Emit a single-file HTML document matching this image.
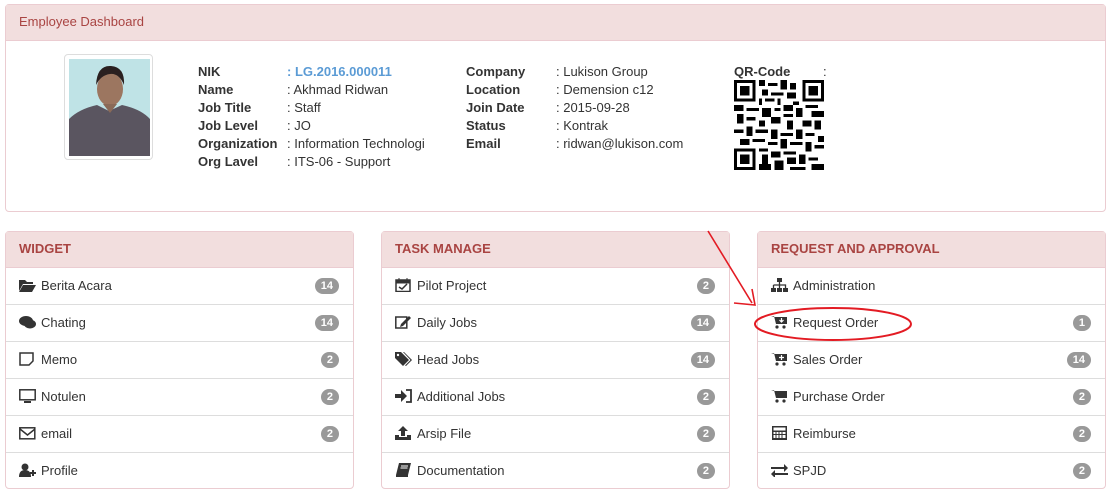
<!DOCTYPE html>
<html><head><meta charset="utf-8"><style>
*{box-sizing:border-box;margin:0;padding:0}
body{width:1111px;height:494px;background:#fff;font-family:"Liberation Sans",Arial,sans-serif;font-size:13px;color:#333;position:relative;overflow:hidden}
.p{position:absolute;border:1px solid #ebccd1;border-radius:4px;background:#fff}
.h{background:#f2dede;color:#a94442;border-bottom:1px solid #ebccd1;height:36px;line-height:34px;padding-left:13px}
.t{position:absolute;line-height:18px;white-space:nowrap}
.b{font-weight:bold}
.row{height:37px;border-bottom:1px solid #ddd;position:relative;line-height:35px;padding-left:13px;color:#333}
.row:last-child{border-bottom:none}
.ic{display:inline-block;width:17px;height:14px;vertical-align:-2px;margin-right:5px}
.bd{position:absolute;right:14px;top:10px;background:#999;color:#fff;font-size:11px;font-weight:bold;line-height:16px;height:16px;border-radius:8px;padding:0 6px}
.hh{font-weight:bold;font-size:13px}
</style></head><body>
<div class="p" style="left:5px;top:4px;width:1101px;height:208px">
<div class="h">Employee Dashboard</div>
</div>
<div style="position:absolute;left:64px;top:54px;width:89px;height:106px;border:1px solid #ddd;border-radius:4px;padding:4px;background:#fff">
<svg width="81" height="97" viewBox="0 0 81 97"><rect width="81" height="97" fill="#bfe3e6"/><path d="M0 60 Q10 50 28 46 L40 52 L53 46 Q72 50 81 60 V97 H0Z" fill="#5a5560"/><ellipse cx="41" cy="30" rx="13" ry="17" fill="#9c7660"/><path d="M27 26 Q28 6 42 7 Q56 8 55 26 Q50 14 41 15 Q32 16 27 26Z" fill="#2a2020"/><path d="M34 45 L41 54 L48 45Z" fill="#8a6a58"/></svg>
</div>
<div class="t b" style="left:198px;top:63px">NIK<br>Name<br>Job Title<br>Job Level<br>Organization<br>Org Lavel</div>
<div class="t" style="left:287px;top:63px"><span style="color:#5b9bd5;font-weight:bold">: LG.2016.000011</span><br>: Akhmad Ridwan<br>: Staff<br>: JO<br>: Information Technologi<br>: ITS-06 - Support</div>
<div class="t b" style="left:466px;top:63px">Company<br>Location<br>Join Date<br>Status<br>Email</div>
<div class="t" style="left:556px;top:63px">: Lukison Group<br>: Demension c12<br>: 2015-09-28<br>: Kontrak<br>: ridwan@lukison.com</div>
<div class="t b" style="left:734px;top:63px">QR-Code</div><div class="t" style="left:823px;top:63px">:</div>
<svg style="position:absolute;left:734px;top:80px" width="90" height="90" viewBox="0 0 29 29" shape-rendering="crispEdges">
<g fill="#000">
<path d="M0 0h7v7h-7zM22 0h7v7h-7zM0 22h7v7h-7z"/>
</g><g fill="#fff"><path d="M1 1h5v5h-5zM23 1h5v5h-5zM1 23h5v5h-5z"/></g>
<g fill="#000"><path d="M2 2h3v3h-3zM24 2h3v3h-3zM2 24h3v3h-3z"/>
<path d="M8 0h2v2h-2zM11 1h3v1h-3zM15 0h2v3h-2zM18 1h2v2h-2zM9 3h2v2h-2zM12 4h4v1h-4zM17 4h3v2h-3zM8 6h1v2h-1zM10 6h3v1h-3zM14 6h1v2h-1zM19 7h2v1h-2z
M0 8h3v2h-3zM4 9h4v1h-4zM9 9h3v3h-3zM13 9h2v1h-2zM16 8h3v2h-3zM20 9h2v3h-2zM23 8h4v1h-4zM25 10h4v2h-4z
M1 11h2v3h-2zM4 12h3v1h-3zM8 13h2v2h-2zM12 12h3v2h-3zM16 11h3v1h-3zM17 13h2v3h-2zM22 13h3v2h-3zM26 13h2v3h-2z
M0 16h3v1h-3zM4 15h2v3h-2zM7 16h4v1h-4zM12 16h2v3h-2zM15 17h4v1h-4zM20 16h2v3h-2zM23 17h3v1h-3zM27 18h2v2h-2z
M2 19h3v2h-3zM6 19h4v1h-4zM11 20h3v1h-3zM15 19h2v3h-2zM18 20h4v1h-4zM23 20h2v3h-2zM26 21h3v1h-3z
M8 22h3v1h-3zM9 24h2v3h-2zM12 23h3v2h-3zM16 23h4v1h-4zM8 27h4v2h-4zM13 26h3v3h-3zM17 25h3v2h-3zM21 24h2v3h-2zM24 25h3v1h-3zM18 28h5v1h-5zM25 27h4v2h-4z"/></g></svg>

<div class="p" style="left:5px;top:231px;width:349px;height:258px">
<div class="h hh">WIDGET</div>
<div class="row"><svg class="ic" viewBox="0 0 17 14"><path d="M0 2h6l2 2h6v2H4L0 13z M4 7h13l-4 7H0z" fill="#333"/></svg>Berita Acara<span class="bd">14</span></div>
<div class="row"><svg class="ic" viewBox="0 0 17 14"><ellipse cx="7" cy="6" rx="7" ry="5" fill="#333"/><ellipse cx="11" cy="9" rx="6" ry="4.5" fill="#333"/></svg>Chating<span class="bd">14</span></div>
<div class="row"><svg class="ic" viewBox="0 0 17 14"><path d="M1 1h13v8l-4 4H1z" fill="none" stroke="#333" stroke-width="1.5"/></svg>Memo<span class="bd">2</span></div>
<div class="row"><svg class="ic" viewBox="0 0 17 14"><rect x="0.8" y="0.8" width="15.4" height="10" fill="none" stroke="#333" stroke-width="1.5"/><path d="M5 13h7" stroke="#333" stroke-width="2"/></svg>Notulen<span class="bd">2</span></div>
<div class="row"><svg class="ic" viewBox="0 0 17 14"><rect x="0.8" y="1.8" width="15" height="11" fill="none" stroke="#333" stroke-width="1.5"/><path d="M1 3l7.5 6L16 3" fill="none" stroke="#333" stroke-width="1.5"/></svg>email<span class="bd">2</span></div>
<div class="row"><svg class="ic" viewBox="0 0 17 14"><circle cx="6" cy="4" r="3.5" fill="#333"/><path d="M0 14q0-7 6-7t6 7z" fill="#333"/><path d="M11 10h6M14 7v6" stroke="#333" stroke-width="2"/></svg>Profile</div>
</div>

<div class="p" style="left:381px;top:231px;width:349px;height:258px">
<div class="h hh">TASK MANAGE</div>
<div class="row"><svg class="ic" viewBox="0 0 17 14"><rect x="1" y="2" width="14" height="11.5" fill="none" stroke="#333" stroke-width="1.5"/><path d="M1 2h14v3H1z M4 0v3M12 0v3" stroke="#333" fill="#333"/><path d="M4 9l3 2 5-5" fill="none" stroke="#333" stroke-width="1.5"/></svg>Pilot Project<span class="bd">2</span></div>
<div class="row"><svg class="ic" viewBox="0 0 17 14"><rect x="0.8" y="2" width="11" height="11" fill="none" stroke="#333" stroke-width="1.5"/><path d="M6 9l8-8 2 2-8 8-3 1z" fill="#333"/></svg>Daily Jobs<span class="bd">14</span></div>
<div class="row"><svg class="ic" viewBox="0 0 17 14"><path d="M0 0h6l8 8-6 6-8-8z" fill="#333"/><path d="M8 0h1l8 8-6 6-1-.5 5.5-5.5z" fill="#333"/><circle cx="3" cy="3" r="1.2" fill="#fff"/></svg>Head Jobs<span class="bd">14</span></div>
<div class="row"><svg class="ic" viewBox="0 0 17 14"><path d="M0 5h6V1l6 6-6 6V9H0z" fill="#333"/><path d="M11 1h5v12h-5" fill="none" stroke="#333" stroke-width="1.8"/></svg>Additional Jobs<span class="bd">2</span></div>
<div class="row"><svg class="ic" viewBox="0 0 17 14"><path d="M8 0l5 5H10v5H6V5H3z M0 9h4v2h8V9h4v5H0z" fill="#333"/></svg>Arsip File<span class="bd">2</span></div>
<div class="row"><svg class="ic" viewBox="0 0 17 14"><path d="M4 0h12l-3 12H1z" fill="#333"/><path d="M1 12h12v2H1z" fill="#333"/><path d="M6 3h7M5.5 5h7" stroke="#fff"/></svg>Documentation<span class="bd">2</span></div>
</div>

<div class="p" style="left:757px;top:231px;width:349px;height:258px">
<div class="h hh">REQUEST AND APPROVAL</div>
<div class="row"><svg class="ic" viewBox="0 0 17 14"><rect x="6" y="0" width="5" height="4" fill="#333"/><path d="M8.5 4v3M2.5 7h12v3M2.5 7v3M8.5 7v3" fill="none" stroke="#333" stroke-width="1.3"/><rect x="0" y="10" width="5" height="4" fill="#333"/><rect x="6" y="10" width="5" height="4" fill="#333"/><rect x="12" y="10" width="5" height="4" fill="#333"/></svg>Administration</div>
<div class="row"><svg class="ic" viewBox="0 0 17 14"><path d="M0 1h3l2 8h9l2-7H4" fill="#333"/><rect x="5" y="2" width="11" height="7" fill="#333"/><circle cx="6" cy="12" r="1.6" fill="#333"/><circle cx="13" cy="12" r="1.6" fill="#333"/><path d="M10.5 3v4M8.5 5l2 2 2-2" fill="none" stroke="#fff" stroke-width="1.2"/></svg>Request Order<span class="bd">1</span></div>
<div class="row"><svg class="ic" viewBox="0 0 17 14"><path d="M0 1h3l2 8h9l2-7H4" fill="#333"/><rect x="5" y="2" width="11" height="7" fill="#333"/><circle cx="6" cy="12" r="1.6" fill="#333"/><circle cx="13" cy="12" r="1.6" fill="#333"/><path d="M10.5 3v5M8 5.5h5" stroke="#fff" stroke-width="1.2"/></svg>Sales Order<span class="bd">14</span></div>
<div class="row"><svg class="ic" viewBox="0 0 17 14"><path d="M0 1h3l2 8h9l2-7H4" fill="#333"/><rect x="5" y="2" width="11" height="7" fill="#333"/><circle cx="6" cy="12" r="1.6" fill="#333"/><circle cx="13" cy="12" r="1.6" fill="#333"/></svg>Purchase Order<span class="bd">2</span></div>
<div class="row"><svg class="ic" viewBox="0 0 17 14"><rect x="1" y="0" width="15" height="14" fill="#333"/><rect x="2.5" y="1.5" width="12" height="3" fill="#fff"/><path d="M2.5 6h2v2h-2zM5.5 6h2v2h-2zM8.5 6h2v2h-2zM11.5 6h3v2h-3zM2.5 9h2v3h-2zM5.5 9h2v3h-2zM8.5 9h2v3h-2zM11.5 9h3v3h-3z" fill="#fff"/></svg>Reimburse<span class="bd">2</span></div>
<div class="row"><svg class="ic" viewBox="0 0 17 14"><path d="M0 4h13V1l4 4-4 4V6H0zM17 10H4V7l-4 4 4 4v-3h13z" fill="#333"/></svg>SPJD<span class="bd">2</span></div>
</div>

<svg style="position:absolute;left:0;top:0" width="1111" height="494">
<path d="M708 231 L752 303" stroke="#e31b23" stroke-width="1.6" fill="none"/>
<path d="M734 303 L755 305 L752 289" stroke="#e31b23" stroke-width="1.6" fill="none"/>
<ellipse cx="833" cy="324" rx="78" ry="16" stroke="#e31b23" stroke-width="2" fill="none"/>
</svg>
</body></html>
